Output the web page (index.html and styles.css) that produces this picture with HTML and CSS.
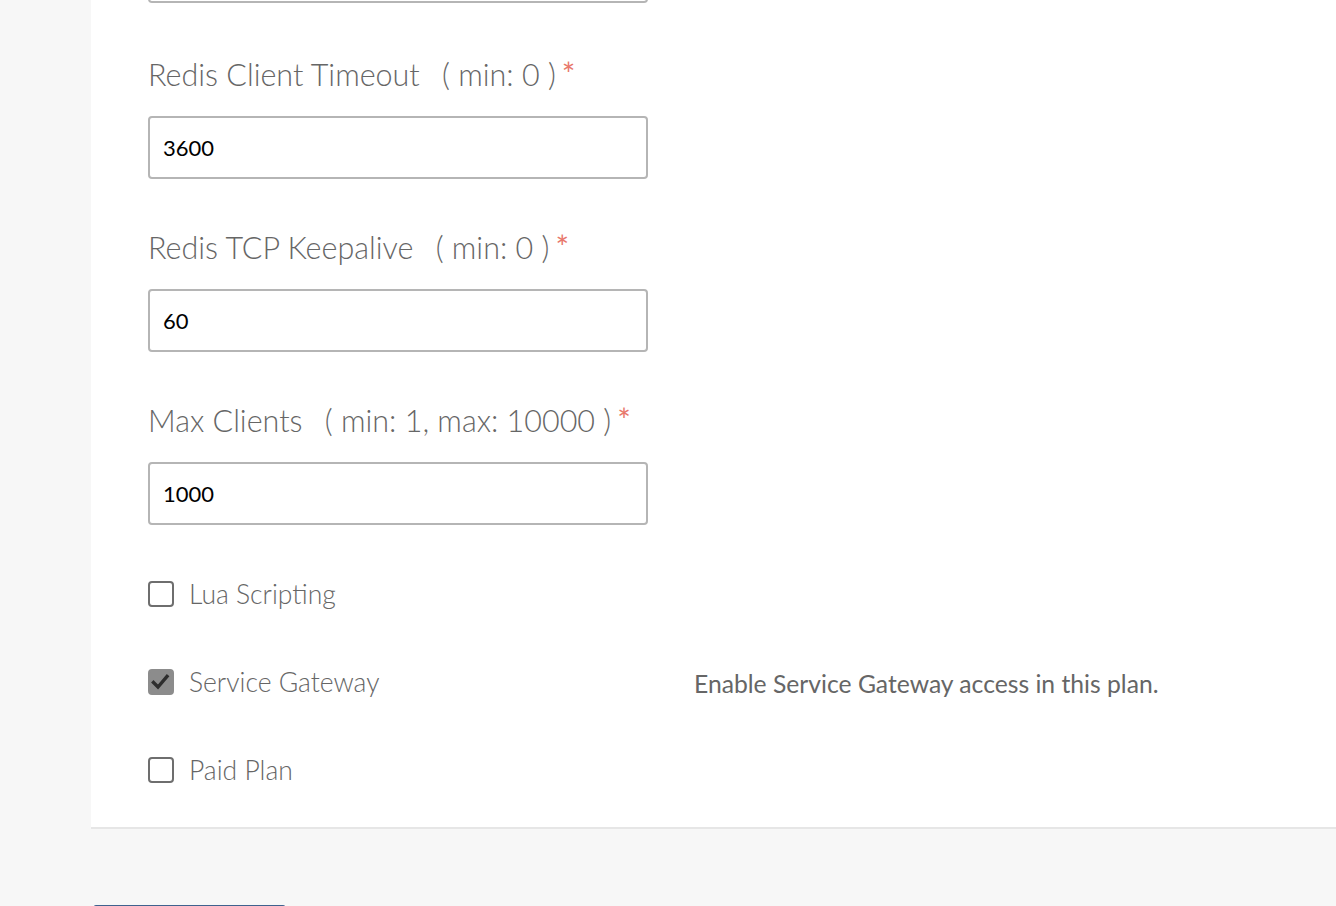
FILE: index.html
```html
<!DOCTYPE html>
<html>
<head>
<meta charset="utf-8">
<link rel="stylesheet" href="styles.css">
</head>
<body>
<div class="page">
  <div class="panel">
    <div class="field first">
      <input class="text-input" type="text" value="">
    </div>
    <div class="field">
      <label class="field-label">Redis Client Timeout <span class="range">( min: 0 )</span><span class="req">*</span></label>
      <input class="text-input" type="text" value="3600">
    </div>
    <div class="field">
      <label class="field-label">Redis TCP Keepalive <span class="range">( min: 0 )</span><span class="req">*</span></label>
      <input class="text-input" type="text" value="60">
    </div>
    <div class="field">
      <label class="field-label">Max Clients <span class="range">( min: 1, max: 10000 )</span><span class="req">*</span></label>
      <input class="text-input" type="text" value="1000">
    </div>
    <div class="checks">
      <div class="check-row">
        <label class="check"><span class="box"></span><span class="check-text">Lua Scripting</span></label>
      </div>
      <div class="check-row">
        <label class="check"><span class="box checked"><svg viewBox="0 0 26 26" width="26" height="26"><path d="M5.5 13.5 L10 18 L19 7.5" fill="none" stroke="#2e2e2e" stroke-width="3.4" stroke-linecap="square"/></svg></span><span class="check-text">Service Gateway</span></label>
        <p class="help">Enable Service Gateway access in this plan.</p>
      </div>
      <div class="check-row">
        <label class="check"><span class="box"></span><span class="check-text">Paid Plan</span></label>
      </div>
    </div>
  </div>
  <div class="actions">
    <button class="primary" type="button" aria-label="Save"></button>
  </div>
</div>
</body>
</html>
```
FILE: styles.css
```css
html, body {
  margin: 0;
  padding: 0;
  background: #f7f7f7;
  overflow: hidden;
  height: 906px;
}
.page {
  padding-left: 91px;
}
.panel {
  background: #ffffff;
  border-bottom: 2px solid #e6e6e6;
  margin-top: -60px;
  padding: 0 0 37px 57px;
}
.field {
  display: flex;
  flex-direction: column;
  align-items: flex-start;
}
.field + .field {
  margin-top: 53px;
}
.field.first {
  margin-bottom: 56px;
}
.field-label {
  font-family: "Lato", "Open Sans", sans-serif;
  font-weight: 300;
  font-size: 30.5px;
  line-height: 30px;
  height: 30px;
  color: #666666;
  margin-bottom: 27px;
  white-space: nowrap;
}
.range {
  margin-left: 14px;
}
.req {
  color: #e8776b;
  font-weight: 400;
  font-size: 32px;
  margin-left: 6px;
  vertical-align: 0;
}
.text-input {
  box-sizing: border-box;
  width: 500px;
  height: 63px;
  border: 2px solid #b5b5b5;
  border-radius: 4px;
  padding: 0 13px;
  font-family: "Lato", "Open Sans", sans-serif;
  font-weight: 400;
  font-size: 22px;
  color: #000000;
  background: #ffffff;
  outline: none;
}
.checks {
  margin-top: 49px;
  display: flex;
  flex-direction: column;
  gap: 48px;
}
.check-row {
  display: grid;
  grid-template-columns: 546px 1fr;
  align-items: center;
  height: 40px;
}
.check {
  display: flex;
  align-items: center;
  gap: 15px;
}
.box {
  box-sizing: border-box;
  width: 26px;
  height: 26px;
  border: 2px solid #6e6e6e;
  border-radius: 4px;
  background: #ffffff;
  display: flex;
  align-items: center;
  justify-content: center;
}
.box.checked {
  background: #8c8c8c;
  border-color: #8c8c8c;
}
.box svg {
  display: block;
  flex: none;
}
.check-text {
  font-family: "Lato", "Open Sans", sans-serif;
  font-weight: 300;
  font-size: 26.5px;
  line-height: 40px;
  color: #666666;
}
.help {
  margin: 2px 0 0 0;
  font-family: "Lato", "Open Sans", sans-serif;
  font-weight: 400;
  font-size: 24.7px;
  color: #666666;
}
.actions {
  padding-top: 76px;
}
.primary {
  display: block;
  margin-left: 2px;
  width: 193px;
  height: 50px;
  border: 1px solid #3f628e;
  border-radius: 3px;
  background: #4a73a4;
}
```
